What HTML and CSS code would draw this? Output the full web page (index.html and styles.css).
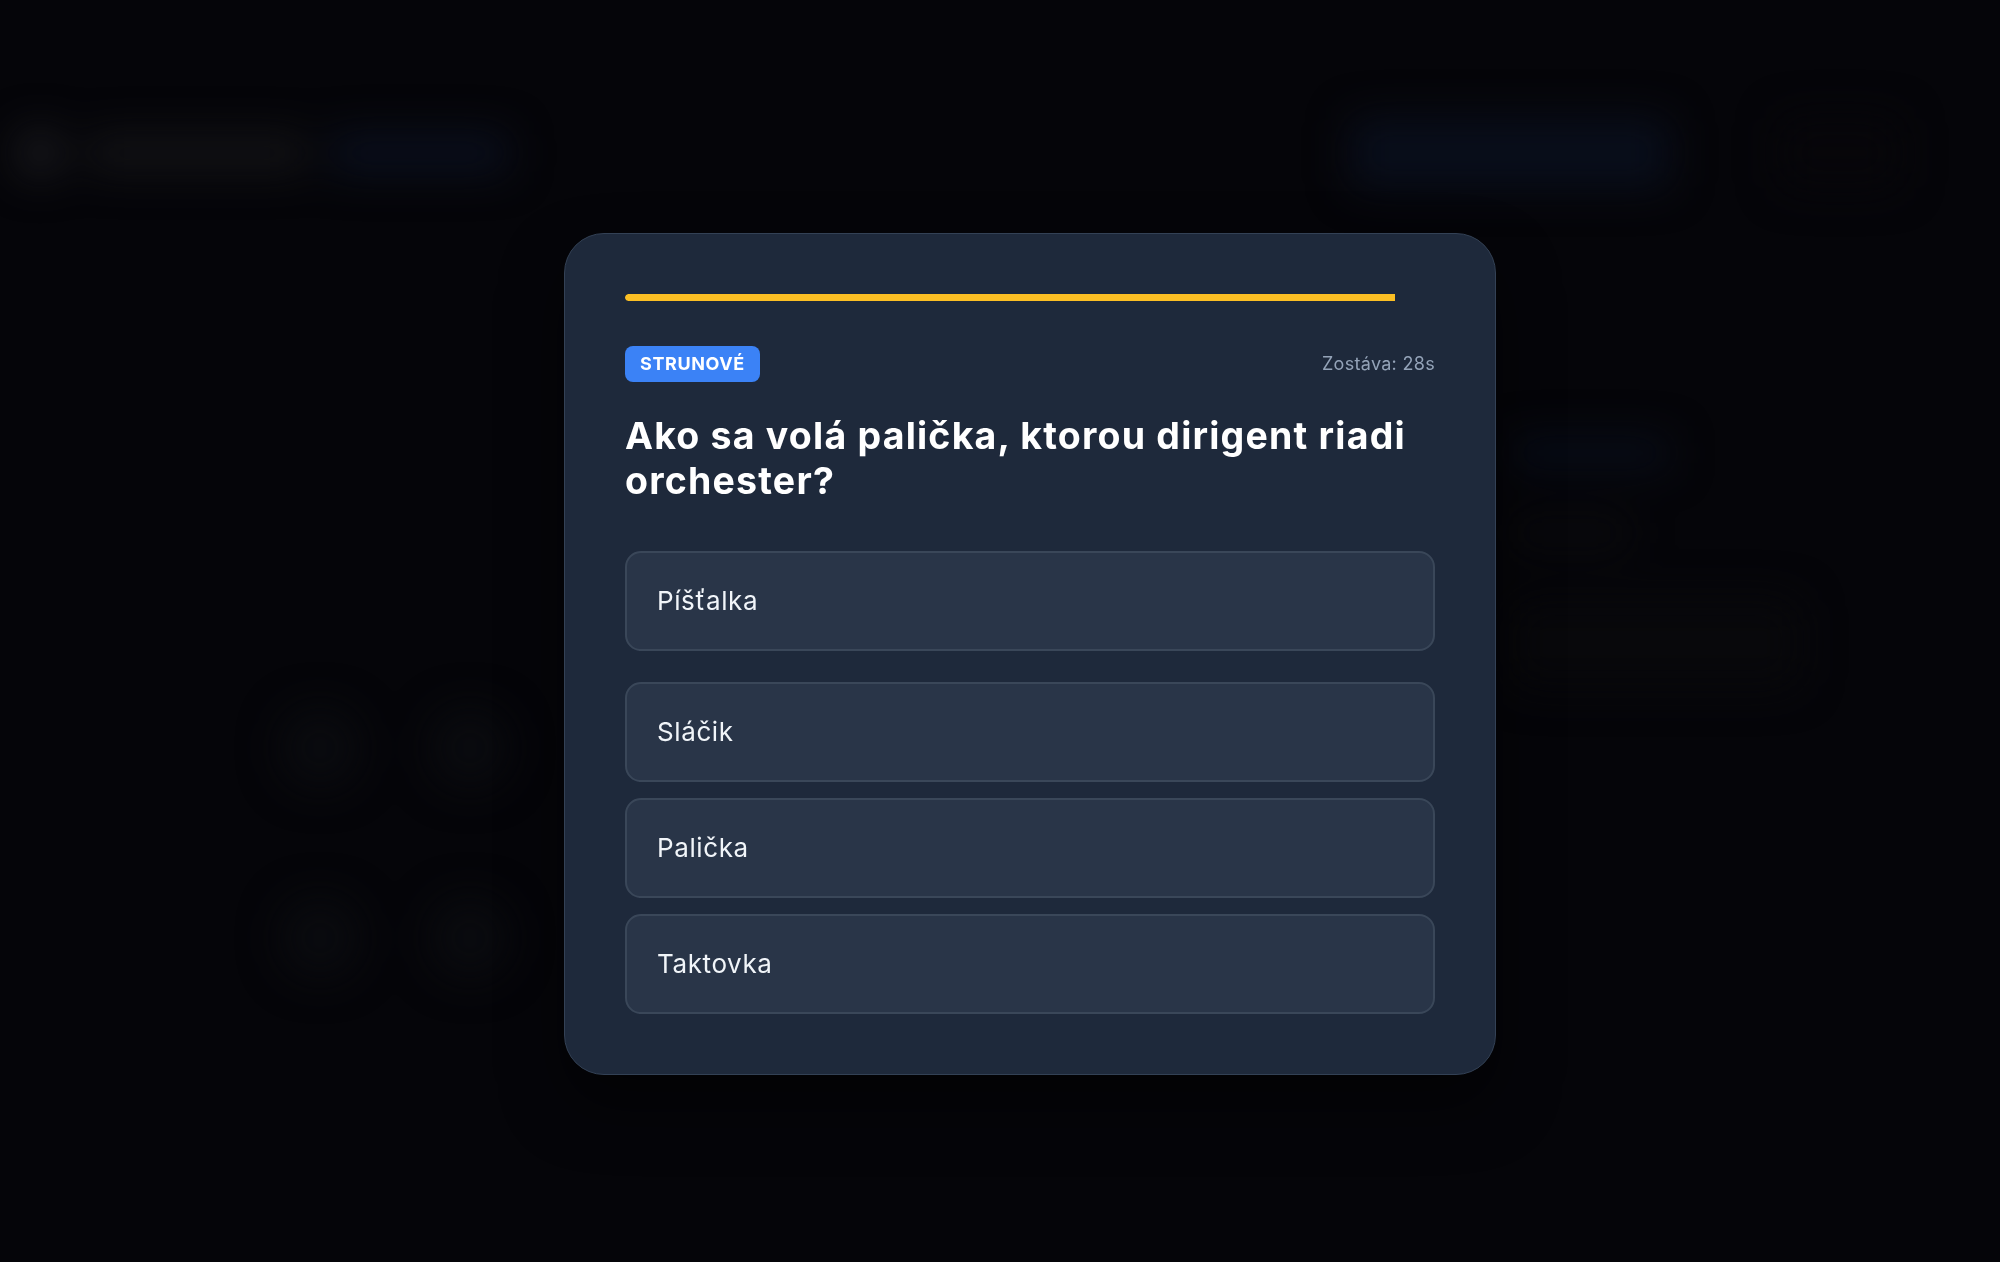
FILE: index.html
```html
<!DOCTYPE html>
<html lang="sk">
<head>
<meta charset="utf-8">
<title>Kvíz</title>
<link rel="stylesheet" href="styles.css">
</head>
<body>
<div class="backdrop">
  <header class="bg-header">
    <div class="bg-logo">
      <span class="bg-dot"></span>
      <span class="bg-title"></span>
      <span class="bg-pill"></span>
    </div>
    <div class="bg-actions">
      <span class="bg-button"></span>
      <span class="bg-avatar"></span>
    </div>
  </header>
  <main class="bg-main">
    <div class="bg-left">
      <span class="bg-blob b1"></span>
      <span class="bg-blob b2"></span>
      <span class="bg-blob b3"></span>
      <span class="bg-blob b4"></span>
    </div>
    <div class="bg-right">
      <span class="bg-line l1"></span>
      <span class="bg-line l2"></span>
      <span class="bg-box"></span>
    </div>
  </main>
</div>

<div class="overlay">
  <section class="card">
    <div class="progress"><div class="progress-fill" style="width:95%"></div></div>
    <div class="meta">
      <span class="badge">STRUNOVÉ</span>
      <span class="timer">Zostáva: 28s</span>
    </div>
    <h1 class="question">Ako sa volá palička, ktorou dirigent riadi orchester?</h1>
    <div class="options">
      <button class="option first">Píšťalka</button>
      <button class="option">Sláčik</button>
      <button class="option">Palička</button>
      <button class="option">Taktovka</button>
    </div>
  </section>
</div>
</body>
</html>
```

FILE: styles.css
```css
* { box-sizing: border-box; }

html, body {
  margin: 0;
  height: 100%;
}

body {
  background: #050509;
  font-family: Inter, "Noto Sans", "DejaVu Sans", sans-serif;
  overflow: hidden;
}

/* blurred page behind the modal */
.backdrop {
  height: 100%;
  filter: blur(20px);
}

.bg-header {
  display: flex;
  justify-content: space-between;
  align-items: center;
  padding: 118px 100px 0 15px;
}

.bg-logo {
  display: flex;
  align-items: center;
  gap: 22px;
}

.bg-dot {
  width: 50px;
  height: 50px;
  border-radius: 50%;
  background: #18181c;
}

.bg-title {
  width: 220px;
  height: 36px;
  border-radius: 8px;
  background: #131316;
}

.bg-pill {
  width: 180px;
  height: 40px;
  border-radius: 10px;
  background: #0a0f1d;
}

.bg-actions {
  display: flex;
  align-items: center;
  gap: 110px;
}

.bg-button {
  width: 320px;
  height: 70px;
  border-radius: 12px;
  background: #090e1b;
}

.bg-avatar {
  width: 120px;
  height: 70px;
  border-radius: 12px;
  background: #07060a;
}

.bg-main {
  display: flex;
  justify-content: space-between;
  padding: 80px 200px 0 280px;
}

.bg-left {
  display: grid;
  grid-template-columns: 110px 110px;
  gap: 110px 40px;
  padding-top: 440px;
}

.bg-blob {
  width: 80px;
  height: 80px;
  border-radius: 50%;
  background: #0a0b0f;
}

.bg-right {
  display: flex;
  flex-direction: column;
  gap: 50px;
  padding-top: 170px;
  width: 290px;
}

.bg-line {
  height: 30px;
  width: 160px;
  border-radius: 8px;
  background: #080d19;
}

.bg-line.l2 { width: 120px; background: #0a0a0d; }

.bg-box {
  height: 90px;
  border-radius: 18px;
  background: #08080b;
}

/* modal */
.overlay {
  position: fixed;
  inset: 0;
  display: flex;
  align-items: center;
  justify-content: center;
  padding: 45px 0 0 60px;
}

.card {
  width: 932px;
  background: #1e293b;
  border: 1px solid #334155;
  border-radius: 40px;
  padding: 60px;
  box-shadow: 0 30px 60px rgba(0, 0, 0, 0.5);
}

.progress {
  height: 7px;
  margin-bottom: 45px;
  border-radius: 4px;
  overflow: hidden;
}

.progress-fill {
  height: 100%;
  background: #fbbf24;
  border-radius: 4px 0 0 4px;
}

.meta {
  display: flex;
  justify-content: space-between;
  align-items: center;
  height: 36px;
  margin-bottom: 31px;
}

.badge {
  display: inline-flex;
  align-items: center;
  height: 36px;
  padding: 0 15px;
  border-radius: 8px;
  background: #3b82f6;
  color: #ffffff;
  font-weight: 700;
  font-size: 18px;
  letter-spacing: 0.6px;
}

.timer {
  color: #94a3b8;
  font-size: 18px;
  letter-spacing: 0.3px;
}

.question {
  margin: 0 0 48px;
  color: #ffffff;
  font-size: 37.5px;
  line-height: 45px;
  font-weight: 700;
  letter-spacing: 1.2px;
}

.options {
  display: flex;
  flex-direction: column;
  gap: 16px;
}

.option {
  display: block;
  width: 100%;
  text-align: left;
  font-family: inherit;
  font-size: 26px;
  line-height: 36px;
  padding: 30px;
  color: #f1f5f9;
  background: #293548;
  border: 2px solid #3a4759;
  border-radius: 16px;
  letter-spacing: 0.6px;
}

.option.first {
  margin-bottom: 15px;
}
```
